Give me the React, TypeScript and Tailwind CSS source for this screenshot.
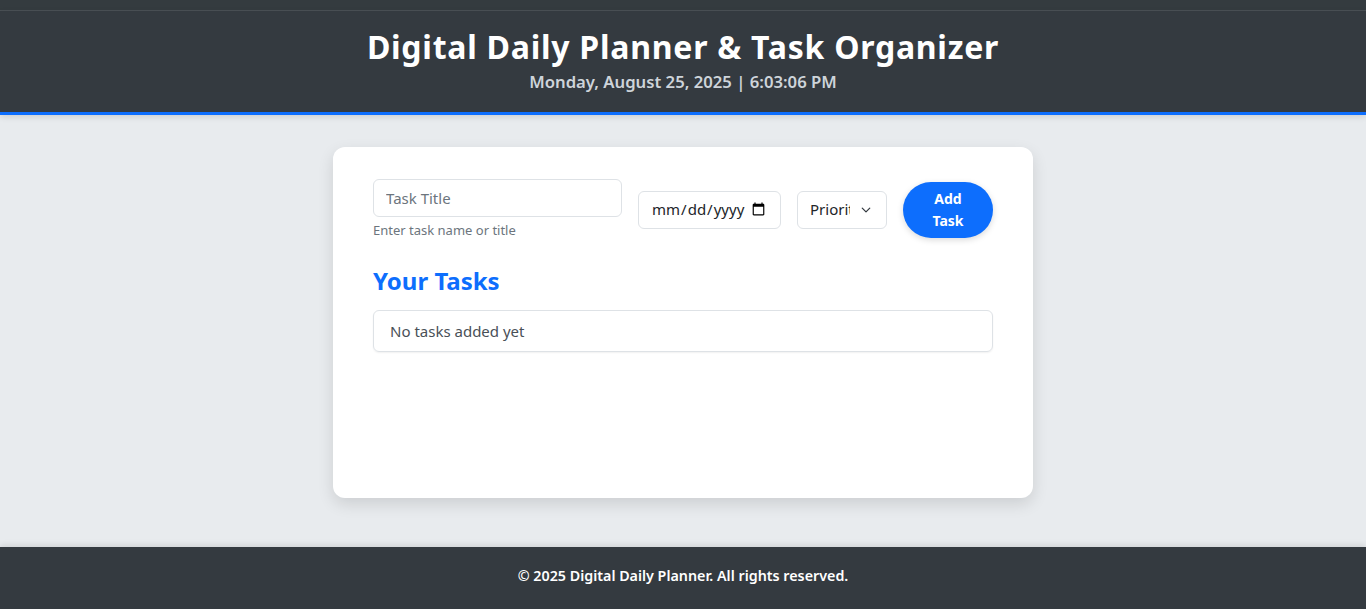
import React from "react";

export default function App() {
  const font = { fontFamily: '"Noto Sans", "Open Sans", sans-serif' };
  return (
    <div className="min-h-screen flex flex-col bg-[#e8ebee]" style={font}>
      <div className="h-[11px] bg-[#343b3f] border-b border-[#4a5055]" />
      <header className="bg-[#343a40] border-b-[3px] border-[#0d6efd] h-[104px] flex flex-col items-center pt-[17px] shadow-[0_2px_6px_rgba(0,0,0,0.12)]">
        <h1 className="text-[32px] leading-[38px] font-bold text-white tracking-[0.75px]">
          Digital Daily Planner &amp; Task Organizer
        </h1>
        <p className="text-[16.7px] leading-[24px] font-semibold text-[#ced4da] mt-[4px]">
          Monday, August 25, 2025 | 6:03:06 PM
        </p>
      </header>
      <main className="flex-1 flex justify-center pt-8">
        <div className="w-[700px] h-[351px] bg-white rounded-[12px] shadow-[0_6px_16px_rgba(0,0,0,0.12)] px-10 pt-8">
          <div className="flex items-center gap-4">
            <div className="flex flex-col w-[249px]">
              <input
                type="text"
                placeholder="Task Title"
                className="h-[38px] w-full border border-[#dee2e6] rounded-[6px] px-3 text-[15px] text-[#212529] placeholder:text-[#6c757d] outline-none"
              />
              <span className="text-[13px] leading-[16px] text-[#6c757d] mt-[5px]">Enter task name or title</span>
            </div>
            <input
              type="date"
              className="h-[38px] w-[143px] mt-[2px] border border-[#dee2e6] rounded-[6px] px-3 text-[15px] text-[#212529] outline-none"
            />
            <div className="relative h-[38px] w-[90px] mt-[2px] border border-[#dee2e6] rounded-[6px] flex items-center pl-3 text-[15px] text-[#212529]">
              <span className="w-[40px] overflow-hidden whitespace-nowrap">Priority</span>
              <svg className="absolute right-[13px] top-[13px]" width="14" height="10" viewBox="0 0 16 16" fill="none" stroke="#343a40" strokeWidth="2" strokeLinecap="round" strokeLinejoin="round">
                <path d="M2 5l6 6 6-6" />
              </svg>
            </div>
            <button className="w-[90px] h-[56px] mt-[2px] rounded-full bg-[#0d6efd] text-white text-[14px] font-bold leading-[22px] shadow-[0_2px_6px_rgba(0,0,0,0.15)]">
              Add
              <br />
              Task
            </button>
          </div>
          <h2 className="text-[24px] leading-[30px] font-bold text-[#0d6efd] mt-[28px]">Your Tasks</h2>
          <div className="mt-[14px] h-[42px] border border-[#dee2e6] rounded-[6px] flex items-center px-4 text-[15px] text-[#495057] shadow-[0_1px_2px_rgba(0,0,0,0.06)]">
            No tasks added yet
          </div>
        </div>
      </main>
      <footer className="h-[62px] bg-[#343a40] flex items-center justify-center pb-[5px] shadow-[0_-2px_6px_rgba(0,0,0,0.1)]">
        <p className="text-[14.3px] font-semibold text-white">© 2025 Digital Daily Planner. All rights reserved.</p>
      </footer>
    </div>
  );
}
